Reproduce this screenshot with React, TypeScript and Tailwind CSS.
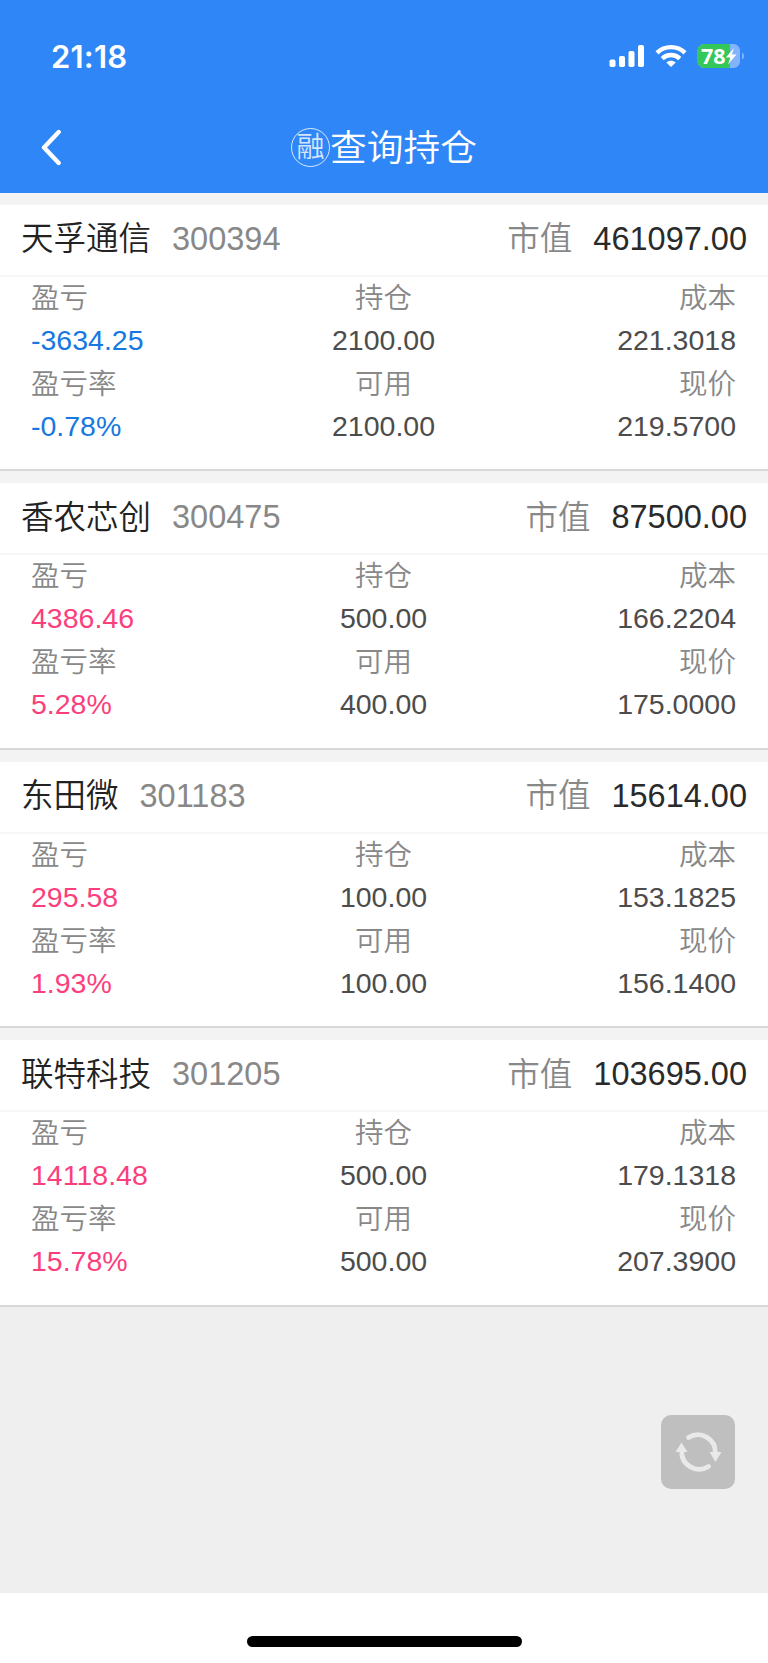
interface Holding {
  name: string;
  code: string;
  marketValue: string;
  profit: string;
  profitRate: string;
  quantity: string;
  available: string;
  cost: string;
  price: string;
}

const holdings: Holding[] = [
  {
    name: '天孚通信',
    code: '300394',
    marketValue: '461097.00',
    profit: '-3634.25',
    profitRate: '-0.78%',
    quantity: '2100.00',
    available: '2100.00',
    cost: '221.3018',
    price: '219.5700',
  },
  {
    name: '香农芯创',
    code: '300475',
    marketValue: '87500.00',
    profit: '4386.46',
    profitRate: '5.28%',
    quantity: '500.00',
    available: '400.00',
    cost: '166.2204',
    price: '175.0000',
  },
  {
    name: '东田微',
    code: '301183',
    marketValue: '15614.00',
    profit: '295.58',
    profitRate: '1.93%',
    quantity: '100.00',
    available: '100.00',
    cost: '153.1825',
    price: '156.1400',
  },
  {
    name: '联特科技',
    code: '301205',
    marketValue: '103695.00',
    profit: '14118.48',
    profitRate: '15.78%',
    quantity: '500.00',
    available: '500.00',
    cost: '179.1318',
    price: '207.3900',
  },
];

const StatusBar = () => (
  <div className="flex h-[102px] items-start justify-between pl-[51px] pr-[22px] text-white">
    <span className="mt-[38px] font-['Inter',sans-serif] text-[31px] leading-[38px] font-semibold tracking-[0.2px]">21:18</span>
    <div className="mt-[43px] flex">
      {/* Signal */}
      <svg width="36" height="26" viewBox="0 0 36 26" fill="currentColor">
        <rect x="0.5" y="16.5" width="6" height="7.5" rx="1.8" />
        <rect x="10" y="13" width="6" height="11" rx="1.8" />
        <rect x="19.5" y="8" width="6" height="16" rx="1.8" />
        <rect x="29" y="2" width="6" height="22" rx="1.8" />
      </svg>
      {/* Wifi */}
      <svg className="ml-[10px]" width="32" height="26" viewBox="0 0 32 26" fill="none" stroke="currentColor">
        <path d="M2 9.8C9.8 2.2 22.2 2.2 30 9.8" strokeWidth="4.4" />
        <path d="M7.2 15.6C12.2 10.8 19.8 10.8 24.8 15.6" strokeWidth="4.4" />
        <path d="M11.3 19.6C13.9 17.1 18.1 17.1 20.7 19.6L16 24Z" fill="currentColor" stroke="none" />
      </svg>
      {/* Battery */}
      <svg className="-mt-1 ml-[10px]" width="49" height="34" viewBox="0 -4 49 34">
        <defs>
          <clipPath id="battery">
            <rect x="0.5" y="1" width="42.5" height="24" rx="6.5" />
          </clipPath>
        </defs>
        <g clipPath="url(#battery)">
          <rect width="44" height="26" fill="#82b4fa" />
          <rect width="33" height="26" fill="#34c759" />
        </g>
        <path d="M45 9.5C47.7 10.5 47.7 15.5 45 16.5Z" fill="#82b4fa" />
        <text x="4" y="20.6" fontSize="21.5" fontWeight="700" fill="#fff" className="font-['Open_Sans',sans-serif]">78</text>
        <path d="M37 5L28.8 14.6H33.3L31 21.5L39.5 11.5H34.8Z" fill="#fff" />
      </svg>
    </div>
  </div>
);

const NavBar = () => (
  <div className="grid h-[90.5px] grid-cols-[1fr_auto_1fr] items-center text-white">
    <button className="ml-[40px] w-[24px]" aria-label="返回">
      <svg width="24" height="38" viewBox="0 0 24 38" fill="none" stroke="currentColor" strokeWidth="4.4" strokeLinecap="round" strokeLinejoin="round">
        <path d="M18.7 4L4 19.5L18.7 35" />
      </svg>
    </button>
    <div className="flex items-center">
      <span className="flex size-[39px] items-center justify-center rounded-full border border-white/80 pt-0.5 text-[28px] leading-none font-[350] text-white/80">融</span>
      <h1 className="pt-1 text-[36.7px] leading-[50px] font-[350]">查询持仓</h1>
    </div>
  </div>
);

interface CellProps {
  label: string;
  value: string;
  valueClass?: string;
}

const Cell = ({ label, value, valueClass = 'text-[#4c4c4c]' }: CellProps) => (
  <div className="pb-px">
    <div className="leading-[42px] font-[350] text-[#888888]">{label}</div>
    <div className={`leading-[43px] ${valueClass}`}>{value}</div>
  </div>
);

const HoldingCard = ({ item }: { item: Holding }) => {
  const tone = item.profit.startsWith('-') ? 'text-[#1678e0]' : 'text-[#fb3f7c]';

  return (
    <div className="h-[278.5px] border-t-[12px] border-t-[#f3f3f3] border-b-2 border-b-[#d8d8d8] bg-white">
      <div className="flex h-[72px] items-center justify-between border-b-2 border-[#f6f6f6] px-[21px] text-[32.5px]">
        <div className="flex items-center gap-[21px]">
          <span className="font-[350] text-[#222222]">{item.name}</span>
          <span className="pb-px text-[#888888]">{item.code}</span>
        </div>
        <div className="flex items-center gap-[21px]">
          <span className="font-[350] text-[#888888]">市值</span>
          <span className="pb-px text-[#2a2a2a]">{item.marketValue}</span>
        </div>
      </div>
      <div className="grid grid-cols-3 pr-[32px] pl-[31px] text-[28.5px]">
        <Cell label="盈亏" value={item.profit} valueClass={tone} />
        <div className="text-center">
          <Cell label="持仓" value={item.quantity} />
        </div>
        <div className="text-right">
          <Cell label="成本" value={item.cost} />
        </div>
        <Cell label="盈亏率" value={item.profitRate} valueClass={tone} />
        <div className="text-center">
          <Cell label="可用" value={item.available} />
        </div>
        <div className="text-right">
          <Cell label="现价" value={item.price} />
        </div>
      </div>
    </div>
  );
};

const App = () => {
  return (
    <div className="relative flex h-[1663px] w-[768px] flex-col overflow-hidden bg-[#efefef] font-['Liberation_Sans','Noto_Sans_CJK_SC',sans-serif]">
      <header className="bg-[#2f86f6]">
        <StatusBar />
        <NavBar />
      </header>

      <main className="flex-1">
        {holdings.map((item) => (
          <HoldingCard key={item.code} item={item} />
        ))}
      </main>

      {/* Floating refresh button */}
      <button className="absolute top-[1415px] right-[33px] size-[74px] rounded-[10px] bg-[#bfbfbf]" aria-label="刷新">
        <svg width="74" height="74" viewBox="0 0 74 74" fill="none" stroke="#e9e9e9" strokeWidth="4.8" strokeLinecap="round">
          <path d="M27.5 22.5A17.5 17.5 0 0 1 54.3 38" />
          <path d="M47.5 51.5A17.5 17.5 0 0 1 20.7 36" />
          <path d="M48.5 37H60.5L54.5 47Z" fill="#e9e9e9" stroke="none" />
          <path d="M14.5 37H26.5L20.5 27.5Z" fill="#e9e9e9" stroke="none" />
        </svg>
      </button>

      {/* Home indicator */}
      <footer className="flex h-[70px] justify-center bg-white pt-[43px]">
        <div className="h-[10.5px] w-[275px] rounded-full bg-black" />
      </footer>
    </div>
  );
};

export default App;
